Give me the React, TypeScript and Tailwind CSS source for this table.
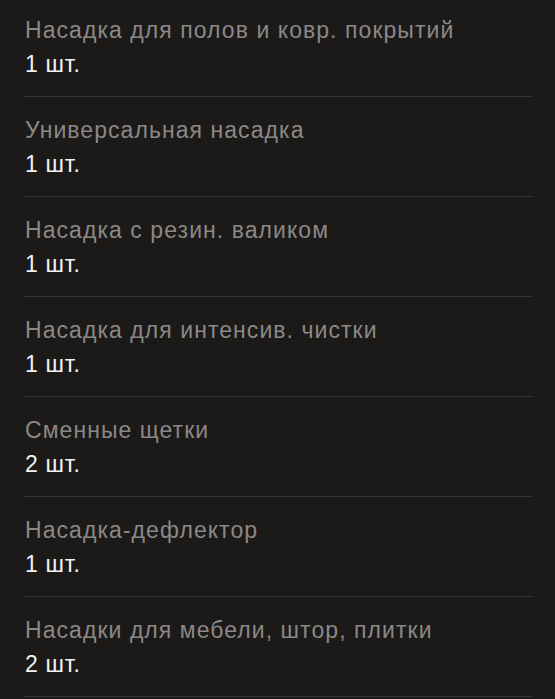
const items = [
  { title: 'Насадка для полов и ковр. покрытий', qty: '1 шт.' },
  { title: 'Универсальная насадка', qty: '1 шт.' },
  { title: 'Насадка с резин. валиком', qty: '1 шт.' },
  { title: 'Насадка для интенсив. чистки', qty: '1 шт.' },
  { title: 'Сменные щетки', qty: '2 шт.' },
  { title: 'Насадка-дефлектор', qty: '1 шт.' },
  { title: 'Насадки для мебели, штор, плитки', qty: '2 шт.' },
]

export default function App() {
  return (
    <div className="min-h-screen bg-[#1c1a19] px-[23px] font-['Liberation_Sans',Arial,sans-serif] overflow-hidden">
      <div className="-mt-[3px]">
        {items.map((item) => (
          <div key={item.title} className="border-b border-[#3a3634] pt-[19px] pb-[18px] pl-[2px]">
            <div className="text-[23px] leading-[28px] tracking-[0.046em] text-[#8b8886] whitespace-nowrap">{item.title}</div>
            <div className="mt-[6px] text-[23px] leading-[28px] tracking-[0.03em] text-[#f2f2f2]">{item.qty}</div>
          </div>
        ))}
      </div>
    </div>
  )
}
